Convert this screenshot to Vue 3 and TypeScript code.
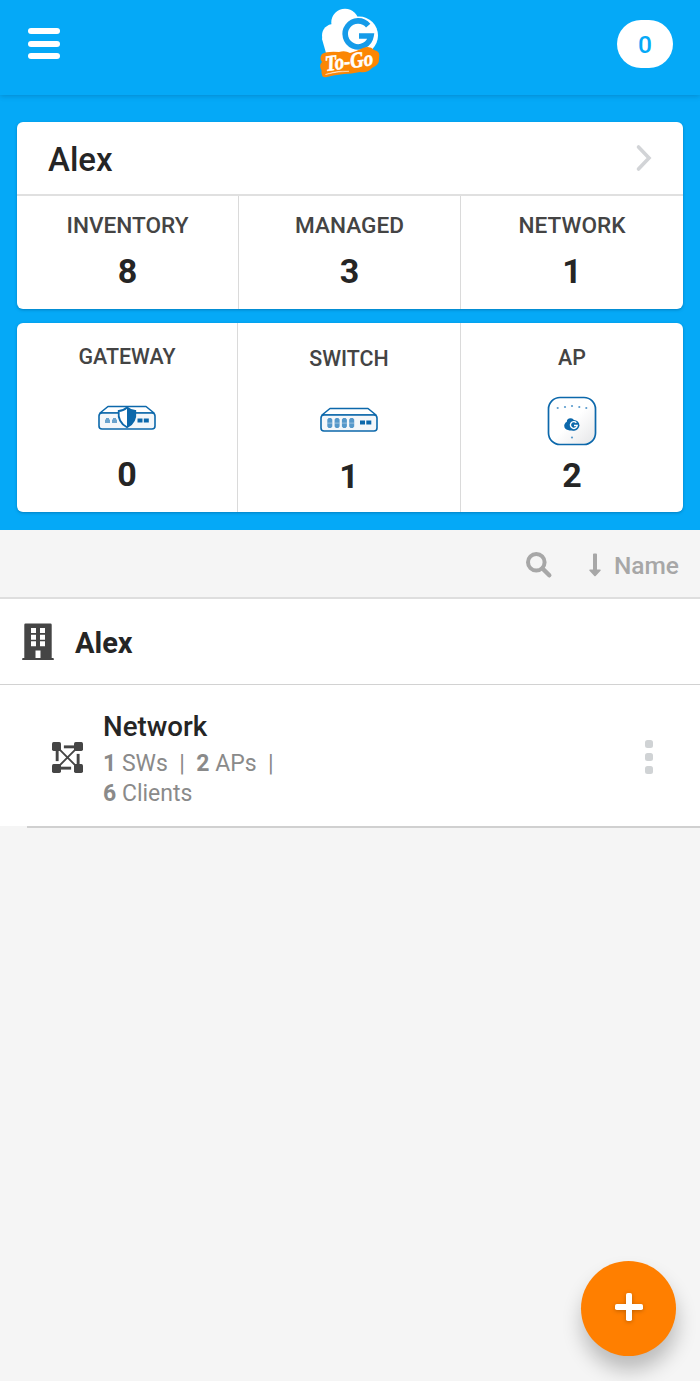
<script setup lang="ts">
interface Stat {
  label: string
  value: number
}

interface Device extends Stat {
  kind: 'gateway' | 'switch' | 'ap'
}

const owner = 'Alex'
const alerts = 0

const stats: Stat[] = [
  { label: 'INVENTORY', value: 8 },
  { label: 'MANAGED', value: 3 },
  { label: 'NETWORK', value: 1 },
]

const devices: Device[] = [
  { kind: 'gateway', label: 'GATEWAY', value: 0 },
  { kind: 'switch', label: 'SWITCH', value: 1 },
  { kind: 'ap', label: 'AP', value: 2 },
]
</script>

<template>
  <div class="screen">
    <header class="topbar">
      <button class="menu" aria-label="Menu">
        <span></span><span></span><span></span>
      </button>
      <svg class="logo" viewBox="0 0 70 74" width="70" height="74">
        <g fill="#fff">
          <circle cx="31" cy="17.5" r="13.7" />
          <circle cx="19.500" cy="30.5" r="11.5" />
          <circle cx="45" cy="30.5" r="19" />
          <path d="M8 34 L14 21 L30 18 L55 40 L46 54 L12 48 Z" />
        </g>
        <path d="M54.2 20.6 A13 13 0 1 0 57 31 H45" fill="none" stroke="#159be9" stroke-width="5.6" />
        <path
          d="M8 49 Q13 46 25 47 Q31 45 36 48 Q43 46 49 43 Q56 40 60 45 Q67 46 65 54 Q65.5 60 58 63 Q53 68.500 46 67 Q37 69 30 69 Q20 70 13 72 Q7 74 7.500 65 Q4.500 60 8 57 Q5 53 8 49 Z"
          fill="#fb8604"
        />
        <text class="logo-text" x="12" y="66" transform="rotate(-7 12 66)" textLength="48" lengthAdjust="spacingAndGlyphs">To-Go</text>
        <path d="M11.500 69.500 Q22 65.500 35 66.300 Q22 66.500 11.500 69.500 Z" fill="#fff" stroke="#fff" stroke-width=".4" />
      </svg>
      <div class="pill">{{ alerts }}</div>
    </header>

    <section class="hero">
      <div class="card">
        <div class="account">
          <span class="account-name">{{ owner }}</span>
          <svg width="18" height="28" viewBox="0 0 18 28">
            <path d="M3.500 3 L14 14 L3.500 25" fill="none" stroke="#d2d4d7" stroke-width="3.6" stroke-linecap="round" />
          </svg>
        </div>
        <div class="columns">
          <div v-for="s in stats" :key="s.label" class="stat">
            <span class="label">{{ s.label }}</span>
            <span class="value">{{ s.value }}</span>
          </div>
        </div>
      </div>

      <div class="card devices">
        <div class="columns">
          <div v-for="d in devices" :key="d.kind" class="device" :class="d.kind">
            <span class="label">{{ d.label }}</span>
            <svg v-if="d.kind === 'gateway'" class="icon" width="58" height="26" viewBox="0 0 58 26">
              <path d="M2 8 L10 1.500 H48 L56 8 Z" fill="#fff" stroke="#0c68ab" stroke-width="1.600" stroke-linejoin="round" />
              <rect x="1" y="8" width="56" height="16" rx="3" fill="#f4f7fa" stroke="#0c68ab" stroke-width="1.600" />
              <g fill="#6ba3cd">
                <path d="M7 14.500 h1 v-1.500 h3 v1.500 h1 v3.500 h-5 Z" />
                <path d="M14 14.500 h1 v-1.500 h3 v1.500 h1 v3.500 h-5 Z" />
              </g>
              <rect x="39.500" y="13.500" width="5" height="4" fill="#0c68ab" />
              <rect x="45.800" y="13.500" width="5" height="4" fill="#0c68ab" />
              <path d="M29 2.500 Q33 6 37.300 6 Q38.500 17.500 29 22.200 Q19.500 17.500 20.700 6 Q25 6 29 2.500 Z" fill="#fff" stroke="#0c68ab" stroke-width="1.800" />
              <path d="M29 2.500 Q33 6 37.300 6 Q38.500 17.500 29 22.200 Z" fill="#0c68ab" />
            </svg>
            <svg v-else-if="d.kind === 'switch'" class="icon" width="58" height="26" viewBox="0 0 58 26">
              <path d="M2 8 L10 1.500 H48 L56 8 Z" fill="#fff" stroke="#0c68ab" stroke-width="1.600" stroke-linejoin="round" />
              <rect x="1" y="8" width="56" height="16" rx="3" fill="#f4f7fa" stroke="#0c68ab" stroke-width="1.600" />
              <g v-for="x in [7.3, 14.6, 21.9, 29.2]" :key="x" fill="#5598ca">
                <path :d="`M${x} 12.500 l1.300-1.500 h2.400 l1.300 1.500 v3.200 h-5 Z M${x} 16.600 h5 v3 l-1.300 1.500 h-2.400 l-1.300-1.500 Z`" />
                <rect :x="x" y="15.500" width="5" height="1.300" opacity=".6" />
              </g>
              <rect x="40" y="13.500" width="5" height="4" fill="#0c68ab" />
              <rect x="46.300" y="13.500" width="5" height="4" fill="#0c68ab" />
            </svg>
            <svg v-else class="icon" width="50" height="50" viewBox="0 0 50 50">
              <defs>
                <linearGradient id="ap-shade" x1="0" y1="0" x2="1" y2="1">
                  <stop offset=".5" stop-color="#fff" />
                  <stop offset="1" stop-color="#e4e5e7" />
                </linearGradient>
              </defs>
              <rect x="1.500" y="1.500" width="47" height="47" rx="11.500" fill="url(#ap-shade)" stroke="#0c68ab" stroke-width="1.700" />
              <g fill="#5b9bcd">
                <circle cx="10.700" cy="12" r="1.100" />
                <circle cx="18" cy="11" r="1.100" />
                <circle cx="25" cy="10" r="1.100" />
                <circle cx="32.300" cy="11" r="1.100" />
                <circle cx="39.300" cy="12" r="1.100" />
                <circle cx="25" cy="41.500" r="1.100" />
              </g>
              <g fill="#0c68ab">
                <circle cx="23.500" cy="26" r="3.700" />
                <circle cx="21.500" cy="29.800" r="4.300" />
                <circle cx="27" cy="29.300" r="5.400" />
                <rect x="20.500" y="29" width="8" height="5.500" rx="2" />
              </g>
              <path d="M29.300 26.700 A3.400 3.400 0 1 0 30.200 29.500 H27" fill="none" stroke="#fff" stroke-width="1.400" />
            </svg>
            <span class="value">{{ d.value }}</span>
          </div>
        </div>
      </div>
    </section>

    <div class="toolbar">
      <svg width="28" height="28" viewBox="0 0 28 28">
        <circle cx="11.300" cy="11.300" r="8.300" fill="none" stroke="#a7a7a7" stroke-width="4" />
        <path d="M17.500 17.500 L24.300 24.300" stroke="#a7a7a7" stroke-width="4.400" stroke-linecap="round" />
      </svg>
      <div class="sort">
        <svg width="12" height="24" viewBox="0 0 12 24">
          <path d="M4 1.500 Q4 .5 5 .5 H7 Q8 .5 8 1.500 V16.500 H11 Q12.200 16.800 11.500 17.800 L6.700 22.900 Q6 23.400 5.300 22.900 L.5 17.800 Q-.2 16.800 1 16.500 H4 Z" fill="#a7a7a7" />
        </svg>
        <span>Name</span>
      </div>
    </div>

    <div class="company">
      <svg width="32" height="38" viewBox="0 0 32 38">
        <path
          fill="#454545"
          fill-rule="evenodd"
          d="M3.500 .500 H28.500 Q29.700 .500 29.700 1.700 V35 H31 Q31.800 35 31.800 35.800 V37 H.2 V35.800 Q.2 35 1 35 H2.300 V1.700 Q2.300 .500 3.500 .500 Z M9 5 h5 v5 h-5 Z M18 5 h5 v5 h-5 Z M9 11.700 h5 v5 h-5 Z M18 11.700 h5 v5 h-5 Z M9 18.300 h5 v5 h-5 Z M18 18.300 h5 v5 h-5 Z M13.500 27.500 h5 v7.500 h-5 Z"
        />
      </svg>
      <span>{{ owner }}</span>
    </div>

    <div class="network">
      <svg class="mesh" width="31" height="31" viewBox="0 0 30 30">
        <g fill="#454545">
          <rect x="0" y="0" width="8.700" height="8.700" rx="1.600" />
          <rect x="21.300" y="0" width="8.700" height="8.700" rx="1.600" />
          <rect x="0" y="21.300" width="8.700" height="8.700" rx="1.600" />
          <rect x="21.300" y="21.300" width="8.700" height="8.700" rx="1.600" />
          <rect x="11.500" y="3.300" width="10" height="2.800" />
          <rect x="8.500" y="23.900" width="10" height="2.800" />
          <rect x="3.600" y="8.500" width="2.800" height="10" />
          <rect x="23.900" y="11.500" width="2.800" height="10" />
        </g>
        <path d="M6 6 L24 24 M24 6 L6 24" stroke="#454545" stroke-width="1.800" />
      </svg>
      <div class="details">
        <div class="title">Network</div>
        <div class="summary"><b>1</b> SWs &nbsp;|&nbsp; <b>2</b> APs &nbsp;|<br /><b>6</b> Clients</div>
      </div>
      <div class="more"><i></i><i></i><i></i></div>
    </div>
    <div class="divider"></div>

    <button class="fab" aria-label="Add">
      <svg width="28" height="28" viewBox="0 0 28 28">
        <g fill="#fff">
          <rect x="11" y="0" width="6" height="28" rx="1.800" />
          <rect x="0" y="11" width="28" height="6" rx="1.800" />
        </g>
      </svg>
    </button>
  </div>
</template>

<style>
body {
  margin: 0;
  background: #f5f5f5;
}
</style>

<style scoped>
.screen {
  box-sizing: border-box;
  position: relative;
  height: 1381px;
  overflow: hidden;
  background: #f5f5f5;
  font-family: Roboto, 'Liberation Sans', sans-serif;
  color: #252525;
}
button {
  border: 0;
  padding: 0;
  background: none;
}
.topbar {
  position: relative;
  box-sizing: border-box;
  display: grid;
  grid-template-columns: 1fr 70px 1fr;
  height: 95px;
  padding: 0 27px 0 28px;
  background: #05a9f7;
  box-shadow: 0 1px 5px rgba(0, 60, 100, 0.28);
}
.menu {
  display: flex;
  flex-direction: column;
  gap: 6.300px;
  width: 32px;
  height: 32px;
  margin-top: 28px;
}
.menu span {
  width: 32px;
  height: 6.300px;
  border-radius: 3px;
  background: #fff;
}
.logo {
  margin: 5px 0 0 -1.500px;
}
.logo-text {
  font: italic 700 22px 'Liberation Serif', serif;
  fill: #fff;
  stroke: #fff;
  stroke-width: 0.600px;
}
.pill {
  justify-self: end;
  width: 56px;
  height: 48px;
  margin-top: 20px;
  border-radius: 24px;
  background: #fff;
  color: #05a9f7;
  font-size: 24.500px;
  font-weight: 500;
  line-height: 50px;
  text-align: center;
}
.hero {
  box-sizing: border-box;
  display: flex;
  flex-direction: column;
  gap: 14px;
  height: 434.500px;
  padding: 27px 17px 0;
  background: #05a9f7;
}
.card {
  box-sizing: border-box;
  height: 187px;
  border-radius: 6px;
  background: #fff;
  box-shadow: 0 1px 3px rgba(0, 50, 90, 0.35);
}
.card.devices {
  height: 189px;
}
.account {
  box-sizing: border-box;
  display: flex;
  align-items: center;
  justify-content: space-between;
  height: 74px;
  padding: 0 30px 0 31px;
  border-bottom: 2px solid #e0e0e0;
}
.account-name {
  font-size: 33px;
  font-weight: 500;
  line-height: 40px;
  padding-top: 4px;
}
.columns {
  display: grid;
  grid-template-columns: repeat(3, 1fr);
}
.devices .columns {
  grid-template-columns: 221px 223px 1fr;
}
.stat,
.device {
  box-sizing: border-box;
  display: flex;
  flex-direction: column;
  align-items: center;
  border-right: 1px solid #dadada;
}
.stat:last-child,
.device:last-child {
  border-right: 0;
}
.stat {
  height: 113px;
  padding-top: 15px;
}
.device {
  height: 189px;
}
.label {
  font-size: 22.600px;
  font-weight: 500;
  line-height: 30px;
  color: #444;
}
.value {
  font-size: 34px;
  font-weight: 700;
  line-height: 40px;
}
.stat .value {
  margin-top: 10px;
}
.device .label {
  font-size: 21.400px;
}
.gateway {
  padding-top: 19px;
}
.gateway .icon {
  margin-top: 33px;
}
.gateway .value {
  margin-top: 23px;
}
.switch {
  padding-top: 21px;
}
.switch .icon {
  margin-top: 33px;
}
.switch .value {
  margin-top: 23px;
}
.ap {
  padding-top: 20px;
}
.ap .icon {
  margin-top: 23px;
}
.ap .value {
  margin-top: 9px;
}
.toolbar {
  box-sizing: border-box;
  display: flex;
  align-items: center;
  justify-content: flex-end;
  gap: 36px;
  height: 69.500px;
  padding: 4px 21px 0 0;
  border-bottom: 2px solid #dedede;
}
.sort {
  display: flex;
  align-items: center;
  gap: 13px;
  color: #a7a7a7;
  font-size: 24.500px;
  font-weight: 500;
}
.company {
  box-sizing: border-box;
  display: flex;
  align-items: center;
  gap: 21px;
  height: 86px;
  padding-left: 22px;
  background: #fff;
  border-bottom: 1px solid #d2d2d2;
  font-size: 29px;
  font-weight: 700;
}
.company span {
  padding-top: 2px;
}
.network {
  display: flex;
  height: 141px;
  background: #fff;
}
.mesh {
  margin: 57px 0 0 52px;
}
.details {
  flex: 1;
  padding: 24px 0 0 20px;
}
.title {
  font-size: 27.700px;
  font-weight: 500;
  line-height: 36px;
}
.summary {
  margin-top: 4px;
  color: #8a8a8a;
  font-size: 23px;
  line-height: 30px;
}
.more {
  display: flex;
  flex-direction: column;
  gap: 5px;
  padding: 55px 47px 0 0;
}
.more i {
  width: 8px;
  height: 8px;
  border-radius: 2.500px;
  background: #d0d3d5;
}
.divider {
  height: 2px;
  margin-left: 27px;
  background: #d0d0d0;
}
.fab {
  position: absolute;
  right: 24px;
  bottom: 25.500px;
  display: flex;
  align-items: center;
  justify-content: center;
  width: 95px;
  height: 95px;
  padding-bottom: 3px;
  border-radius: 50%;
  background: #ff7f00;
  box-shadow: 1px 14px 20px rgba(0, 0, 0, 0.24);
}
.fab svg {
  filter: drop-shadow(0 1px 2px rgba(0, 0, 0, 0.25));
}
</style>
